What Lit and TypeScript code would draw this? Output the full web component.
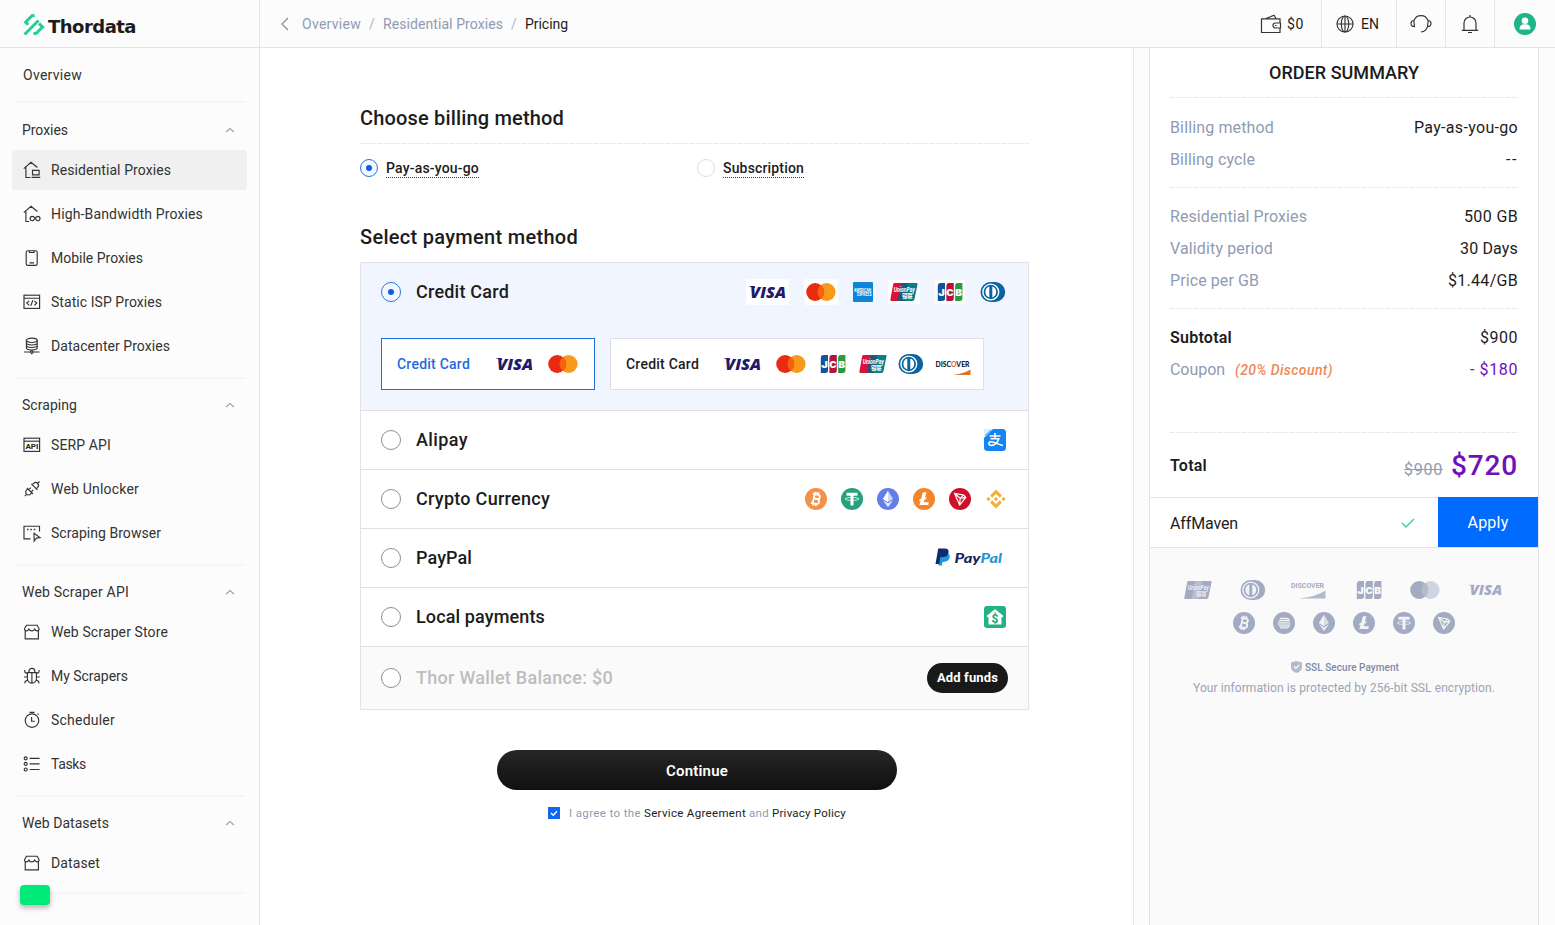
import { LitElement, html, svg, css, nothing } from "lit";
import { customElement, property } from "lit/decorators.js";

/** Text that is tracked in or out so that it fills a given width. */
@customElement("fit-text")
class FitText extends LitElement {
  @property({ type: String }) text = "";
  @property({ type: Number }) w = 0;
  static styles = css`
    :host { display: inline-block; white-space: nowrap; }
    span { display: inline-block; white-space: pre; }
    :host(.old) span { text-decoration: line-through; }
  `;
  firstUpdated() {
    const el = this.renderRoot.querySelector("span") as HTMLElement;
    const natural = el.getBoundingClientRect().width;
    if (this.w) el.style.letterSpacing = (this.w - natural) / this.text.length + "px";
  }
  render() {
    return html`<span>${this.text}</span>`;
  }
}

const t = (text: string, w: number, cls = "") =>
  html`<fit-text class=${cls} .text=${text} .w=${w}></fit-text>`;

const stroke = (body: unknown, s = 18) => html`
  <svg class="ico" width=${s} height=${s} viewBox="0 0 18 18" fill="none" stroke="#333" stroke-width="1.15">${body}</svg>`;

const navIcons: Record<string, unknown> = {
  home: svg`<path d="M.8 7.6 8 1.2l6.400 5.300M2.900 6.300v10.200h4.600M9.500 9.300h6.600v4.600H9.500zM8.600 16.300h8.600"/>`,
  homeInf: svg`<path d="M.8 7.6 8 1.2l6.400 5.300M2.900 6.300v10.200h3.300M12.200 13.300c-1-1.500-1.900-2-2.900-2a2.200 2.200 0 0 0 0 4.400c1.200 0 1.900-.7 2.900-2.400 1-1.400 1.600-2 2.600-2a2.200 2.200 0 0 1 0 4.400c-1 0-1.700-.7-2.600-2.400z"/>`,
  phone: svg`<rect x="3.200" y="1.700" width="11" height="14.600" rx="1.600"/><path d="M6.400 2v1.500h4.600V2M6.500 13.900h4.500"/>`,
  code: svg`<rect x="1" y="2.200" width="15.600" height="13.200"/><path d="M1 5.200h15.600M6.200 7.800 3.800 10l2.400 2.300M11.400 7.800l2.400 2.200-2.400 2.300M9.900 7.300l-2.200 5.600"/>`,
  db: svg`<ellipse cx="8.800" cy="3.300" rx="5.400" ry="2.200"/><path d="M3.400 3.300v7.500c0 1.200 2.400 2.200 5.400 2.200s5.400-1 5.400-2.200V3.300M3.400 5.800C3.400 7 5.800 8 8.800 8s5.400-1 5.400-2.200M3.400 8.300c0 1.200 2.400 2.200 5.400 2.200s5.400-1 5.400-2.200M1 15h6.200M10.400 15h6.200M8.800 13.400 10.400 15l-1.600 1.600L7.200 15z"/>`,
  api: svg`<rect x="1" y="2.200" width="15.600" height="13.200"/><path d="M1 5.200h15.600"/><text x="2.400" y="13.400" font-size="8" font-weight="700" textLength="13" lengthAdjust="spacingAndGlyphs" fill="#222" stroke="none">API</text>`,
  plug: svg`<path d="M1.800 16.200l2-2M8.800 12.900 7.500 14.200a2.800 2.800 0 0 1-4-4l1.300-1.300M4 8l6 6M6.300 9.200l1.600-1.600M8.600 11.500l1.600-1.600M8.400 3.800l6 6M9.300 4.700l1.300-1.300a2.800 2.800 0 0 1 4 4l-1.300 1.300M14.500 3.500l2-2"/>`,
  browser: svg`<path d="M7.500 14.800H1V2.200h15.500v5.300"/><path d="M4 5.400h1.500M7.400 5.400h1.500M10.800 5.400h1.500" stroke-width="1.500"/><path d="m11 9.300 6 4.300-3.600.5L11.200 17z"/>`,
  store: svg`<path d="M2.200 7.600v8.200h13.200V7.600M3.400 2.200h10.800l1.900 3.600c0 1.200-.9 2.100-2 2.100s-1.800-.7-2.400-1.800c-.6 1.100-1.700 1.800-2.900 1.800s-2.300-.7-2.900-1.800c-.6 1.100-1.200 1.800-2.400 1.800s-2-1-2-2.100z"/>`,
  bug: svg`<path d="M4.400 5.600h9v6a4.500 4.500 0 0 1-9 0zM6 5.400V4.200a2.900 2.900 0 0 1 5.800 0v1.200M8.900 5.600V16M1 10h3.200M13.600 10h3.200M1.600 3l.4 2.300 2.400 1.400M16.200 3l-.4 2.300-2.400 1.400M1.800 16.400l.4-2 2.500-1.300M16 16.400l-.4-2-2.500-1.300"/>`,
  clock: svg`<circle cx="9" cy="9.600" r="6.800"/><path d="M6.600 1.300h4.800M8.600 6v4.200h3.300M14.600 2.700l1 1"/>`,
  list: svg`<circle cx="2.700" cy="3.300" r="1.500"/><circle cx="2.700" cy="8.900" r="1.500"/><circle cx="2.700" cy="14.500" r="1.500"/><path d="M6.600 3.300h10M6.600 8.900h10M6.600 14.500h10"/>`,
};

const chevron = html`<svg width="10" height="6" viewBox="0 0 10 6" fill="none" stroke="#999" stroke-width="1.100"><path d="M1.200 5 5 1.400 8.800 5"/></svg>`;

const visa = (c = "#1f1a6b", w = 39) => html`
  <svg class="tile" width=${w} height="22" viewBox="0 0 39 22"><text x="2" y="17" font-family="Open Sans" font-weight="800" font-style="italic" font-size="16.500" textLength="36" lengthAdjust="spacingAndGlyphs" fill=${c}>VISA</text><path d="M.2 5.100h6.400l.8 2.200z" fill=${c}/></svg>`;
const master = (a = "#eb2a12", b = "#f79a1b", m = "#f9600f") => html`
  <svg class="tile" width="30" height="22" viewBox="0 0 30 22"><circle cx="20.600" cy="11" r="9" fill=${b}/><circle cx="9.200" cy="11" r="9" fill=${a}/><path d="M14.900 4a9 9 0 0 1 0 14 9 9 0 0 1 0-14" fill=${m}/></svg>`;
const amex = html`
  <svg width="20" height="20" viewBox="0 0 20 20"><rect width="20" height="20" rx="1" fill="#0a85da"/><g font-weight="700" fill="#fff" font-size="4.500"><text x="1" y="9.600" textLength="17" lengthAdjust="spacingAndGlyphs">AMERICAN</text><text x="4" y="14" textLength="14.500" lengthAdjust="spacingAndGlyphs">EXPRESS</text></g></svg>`;
const union = (a = "#d8133a", b = "#20587c", c = "#0b7f8c", f = "#fff") => html`
  <svg class="tile" width="28" height="20" viewBox="0 0 28 20"><path d="M4.600 1h8L9 19H1.400Q0 19 .4 17.400L3.200 2.200Q3.500 1 4.600 1z" fill=${a}/><path d="M11.500 1h8L16 19H7.500z" fill=${b}/><path d="M18.500 1h8q1.400 0 1 1.400L24.400 17.600Q24 19 22.600 19h-8z" fill=${c}/><g fill=${f} font-weight="700"><text x="3.800" y="9.500" font-style="italic" font-size="6.500" textLength="21" lengthAdjust="spacingAndGlyphs">UnionPay</text><text x="12" y="16.200" font-size="6" font-family="Noto Sans CJK SC" textLength="10.500" lengthAdjust="spacingAndGlyphs">银联</text></g></svg>`;
const jcb = (a = "#0f549d", b = "#b6113a", c = "#2a9a3e", f = "#fff") => html`
  <svg class="tile" width="26" height="20" viewBox="0 0 26 20"><path d="M3.500 1H8v15.500Q8 19 5 19H.8V4Q.8 1 3.500 1z" fill=${a}/><path d="M12 1h4.800v15.500q0 2.500-3 2.500H9.400V4q0-3 2.600-3z" fill=${b}/><path d="M20.600 1h4.800v15.500q0 2.500-3 2.500h-4.300V4q0-3 2.500-3z" fill=${c}/><g fill=${f} font-family="Inter" font-weight="900" font-size="9.500"><text x="1.200" y="13.500" textLength="6.600" lengthAdjust="spacingAndGlyphs">J</text><text x="9.300" y="13.500" textLength="7.400" lengthAdjust="spacingAndGlyphs">C</text><text x="18.200" y="13.500" textLength="6.800" lengthAdjust="spacingAndGlyphs">B</text></g></svg>`;
const diners = (a = "#0b64a0", f = "#fff") => html`
  <svg width="26" height="22" viewBox="0 0 26 22"><path d="M10.500 1H15a10.200 10 0 0 1 0 20h-4.500a10 10 0 0 1 0-20z" fill=${a}/><circle cx="10.800" cy="11" r="8.600" fill=${f}/><circle cx="10.800" cy="11" r="7.200" fill=${a}/><path d="M9.300 5.600v10.800a5.700 5.700 0 0 1 0-10.800zM12.300 5.600v10.800a5.700 5.700 0 0 0 0-10.800z" fill=${f}/></svg>`;
const discover = html`
  <svg width="36" height="24" viewBox="0 0 36 24"><text x=".5" y="14.500" font-family="Lato" font-weight="900" font-size="8" textLength="34" lengthAdjust="spacingAndGlyphs" fill="#222">DISC<tspan fill="#dc7228">O</tspan>VER</text><path d="M35.500 17.500V23H18q12-2 17.500-5.500z" fill="#dc7228"/></svg>`;
const discoverGray = html`
  <svg width="36" height="20" viewBox="0 0 36 20"><text x="0" y="8" font-weight="700" font-size="7" textLength="33" lengthAdjust="spacingAndGlyphs" fill="#a3abc2">DISCOVER</text><path d="M34.500 10.500v8H8Q26 16.500 34.500 10.500z" fill="#b3b9cc"/></svg>`;

const coinArt: Record<string, (f: string) => unknown> = {
  btc: (f) => svg`<g transform="rotate(12 11 11)" fill="none" stroke=${f} stroke-width="1.900"><path d="M6.800 6.300h5.300a2.200 2.200 0 0 1 0 4.500H8.600h4a2.500 2.500 0 0 1 0 4.900H6.800M8.700 6.300v9.400M9.500 3.900v2.400M12.100 3.900v2.400M9.500 15.700v2.400M12.100 15.700v2.400"/></g>`,
  usdt: (f) => svg`<path d="M5.500 4.800h11v2.900h-4v9.800h-3V7.700h-4z" fill=${f}/><ellipse cx="11" cy="10.900" rx="6.800" ry="1.500" fill="none" stroke=${f} stroke-width=".8"/>`,
  eth: (f) => svg`<path d="m11 2.800 5 8.300-5 3-5-3z" fill=${f} opacity=".7"/><path d="M11 2.800v11.300l-5-3z" fill=${f}/><path d="m6 12.200 5 3 5-3-5 7z" fill=${f} opacity=".85"/>`,
  ltc: (f) => svg`<path d="M10 4.300h3.400l-1.500 5.600 1.800-.7-.5 1.800-1.800.7-.7 2.500h5.200l-.7 2.700H6.400l1.100-4.200-1.500.6.500-1.800 1.500-.6z" fill=${f}/>`,
  trx: (f) => svg`<path d="m5.500 5.300 9 1.700 2.300 2.300-6.200 7.800zM5.500 5.300l5.700 5 3.300-3.300M11.200 10.300l-.6 6.800M11.200 10.300l5.600-1" fill="none" stroke=${f} stroke-width="1.200" stroke-linejoin="round"/>`,
  stack: (f) => svg`<path d="M7 6.400h6.500q2 0 2.700 2H6M4.800 10.200h12.400M4.800 12h12.400M6 13.900h10.200q-.7 2-2.700 2H7" fill="none" stroke=${f} stroke-width="1.100"/>`,
};
const coin = (kind: string, c: string, f = "#fff") => html`
  <svg width="22" height="22" viewBox="0 0 22 22"><circle cx="11" cy="11" r="11" fill=${c}/>${coinArt[kind](f)}</svg>`;
const bnb = html`
  <svg width="22" height="22" viewBox="0 0 22 22" fill="#f0b23a"><path d="m11 1.500 6 6-2.200 2.200L11 5.900 7.200 9.700 5 7.500zM11 20.500l-6-6 2.200-2.200 3.800 3.800 3.800-3.800 2.200 2.200zM11 8.800l2.200 2.200-2.200 2.200L8.800 11zM3.500 8.800 5.700 11l-2.200 2.200L1.300 11zM18.500 8.800l2.200 2.200-2.200 2.200-2.200-2.200z"/></svg>`;
const alipay = html`
  <svg width="22" height="22" viewBox="0 0 22 22"><rect width="22" height="22" rx="3.500" fill="#1683f2"/><path d="M0 3.500Q0 0 3.500 0H9L0 9z" fill="#e8f2ff"/><path d="M1 6.500 7 .8M2.500 7.500 9.500.8" stroke="#1683f2" stroke-width=".9"/><path d="M5.500 7h11M11 4v5.800M6.500 9.800h8.300q-2 6-7 6.600c-3.500.3-4-3.200-1-3.600 3-.3 6 2 12 3.800" fill="none" stroke="#fff" stroke-width="1.600"/></svg>`;
const local = html`
  <svg width="22" height="22" viewBox="0 0 22 22"><rect width="22" height="22" rx="3" fill="#21b184"/><path d="M11 3 19.500 10l-1.200 1.400-.8-.6V18.500h-13v-7.700l-.8.600L2.500 10z" fill="#fff"/><text x="11" y="17" text-anchor="middle" font-size="12" font-weight="700" fill="#21a37a">$</text></svg>`;
const paypal = html`
  <svg width="72" height="22" viewBox="0 0 72 22"><path d="M6.500 6h7q3 1.500 2 5t-6 4H8.500L7.800 18.500H4.500z" fill="#1999dc"/><path d="M4.200 1.500h6.600q4.400 0 3.700 4.200t-5.700 4.200H6.400L5.300 17H1.500z" fill="#12296f"/><g font-family="Lato" font-weight="900" font-style="italic" font-size="14"><text x="20.500" y="16" fill="#17265f" textLength="26" lengthAdjust="spacingAndGlyphs">Pay</text><text x="46.500" y="16" fill="#2a93cf" textLength="21.500" lengthAdjust="spacingAndGlyphs">Pal</text></g></svg>`;

const nav = [
  { title: ["Proxies", 46], items: [["home", "Residential Proxies", 120], ["homeInf", "High-Bandwidth Proxies", 152], ["phone", "Mobile Proxies", 92], ["code", "Static ISP Proxies", 111], ["db", "Datacenter Proxies", 119]] },
  { title: ["Scraping", 55], items: [["api", "SERP API", 60], ["plug", "Web Unlocker", 88], ["browser", "Scraping Browser", 110]] },
  { title: ["Web Scraper API", 107], items: [["store", "Web Scraper Store", 117], ["bug", "My Scrapers", 77], ["clock", "Scheduler", 64], ["list", "Tasks", 35]] },
  { title: ["Web Datasets", 87], items: [["store", "Dataset", 49]] },
] as { title: [string, number]; items: [string, string, number][] }[];

const G = "#a3abc2";
const G2 = "#b8bed0";

@customElement("app-root")
class AppRoot extends LitElement {
  static styles = css`
    :host { display: block; height: 925px; overflow: hidden; font-family: Roboto, "Noto Sans", sans-serif; font-size: 14px; color: #1c1c1c; background: #fff; }
    * { box-sizing: border-box; }
    svg { display: block; flex: none; overflow: visible; }
    .shell { display: grid; grid-template: 48px 877px / 260px 1fr; height: 925px; position: relative; }
    .row { display: flex; align-items: center; }
    .brand, .top { background: #fcfcfc; border-bottom: 1px solid #e3e3e3; display: flex; align-items: center; }
    .brand { border-right: 1px solid #e6e6e6; padding: 3px 0 0 22px; gap: 3px; }
    .brand fit-text { font-family: "DejaVu Sans", sans-serif; font-weight: 700; font-size: 18px; line-height: 22px; color: #1c1c1c; padding-top: 3px; }
    .top { padding-left: 20px; }
    .crumbs { gap: 8px; color: #8f9bb3; flex: 1; padding-top: 1px; }
    .crumbs .slash { color: #b2b6c0; }
    .crumbs .now { color: #1c1c1c; }
    .cell { height: 47px; border-left: 1px solid #e6e6e6; display: flex; align-items: center; justify-content: center; padding-top: 1px; }
    .c0 { border: 0; gap: 5px; width: 78px; }
    .c1 { width: 75px; gap: 7px; padding: 1px 3px 0 0; } .c2 { width: 49px; } .c3 { width: 49px; } .c4 { width: 61px; }

    .side { background: #fcfcfc; border-right: 1px solid #e6e6e6; padding: 7px 12px 0 12px; color: #333; }
    .over { height: 40px; padding-left: 11px; display: flex; align-items: center; }
    .sep { height: 2px; margin: 11px 2px 6px 4px; background: #f6f6f6; }
    .sep.first { margin: 6px 2px 7px 4px; }
    .sep.last { margin-top: 9px; }
    .shead { height: 40px; padding: 0 12px 0 10px; display: flex; align-items: center; justify-content: space-between; }
    .items { display: flex; flex-direction: column; gap: 4px; }
    .item { height: 40px; padding-left: 11px; gap: 10px; display: flex; align-items: center; border-radius: 3px; width: 235px; }
    .item.on { background: #f0f0f0; }
    .green { position: absolute; left: 20px; top: 885px; width: 30px; height: 20px; border-radius: 4px; background: #00ea7a; box-shadow: 0 3px 5px rgba(90, 40, 60, .35); }

    .body { display: grid; grid-template-columns: 874px 15px 390px 1fr; background: #fcfcfc; }
    .main { background: #fff; border-right: 1px solid #e6e6e6; padding: 56px 104px 0 100px; }
    h2 { margin: 0; font-weight: 500; font-size: 20px; line-height: 28px; height: 28px; }
    .dash { height: 1px; background: repeating-linear-gradient(90deg, #e9e9e9 0 4px, #f6f6f6 4px 6px); }
    .bill { margin-top: 11px; }
    .choices { display: grid; grid-template-columns: 337px 1fr; margin-top: 13px; height: 22px; }
    .choice { gap: 8px; font-weight: 500; }
    .choice fit-text { border-bottom: 1px dotted #333; line-height: 18px; height: 19px; margin-top: 1px; }
    .radio { flex: none; width: 20px; height: 20px; border-radius: 50%; border: 1px solid #8d8d98; background: #fff; display: grid; place-items: center; }
    .radio.sm { width: 18px; height: 18px; }
    .radio.light { border-color: #dcdcdc; }
    .radio.on { border-color: #2f74e0; background: #f2f8ff; }
    .radio.on::after { content: ""; width: 6px; height: 6px; border-radius: 50%; background: #1259e8; }
    .h2b { margin-top: 44px; }
    .pay { margin-top: 11px; border: 1px solid #e3e3e6; width: 669px; }
    .line { height: 59px; border-top: 1px solid #e0e0e3; padding: 0 22px 0 20px; font-size: 18px; font-weight: 500; gap: 15px; }
    .line .grow { flex: 1; margin-top: -1px; }
    .credit { background: #f1f5ff; height: 147px; }
    .credit .line { border: 0; height: 58px; }
    .line.wallet { height: 63px; background: #fafafa; color: #bdbdbd; padding-right: 20px; }
    .tile { background: #fff; box-shadow: 0 0 0 2px rgba(255, 255, 255, .8); }
    .brands { display: flex; align-items: center; gap: 17px; }
    .brands .a { margin-right: 2px; }
    .coins { display: flex; gap: 14px; margin-right: -1px; }
    .opts { display: flex; gap: 15px; padding: 17px 0 0 20px; font-weight: 500; }
    .opt { height: 52px; background: #fff; border: 1px solid #dfe1e8; display: flex; align-items: center; padding-left: 15px; width: 374px; }
    .opt.on { width: 214px; border-color: #1a70d8; color: #1f6ae0; }
    .g25 { margin-left: 25px; } .g24 { margin-left: 24px; } .g14 { margin-left: 14px; } .g13 { margin-left: 13px; } .g11 { margin-left: 11px; }
    .funds { width: 81px; height: 30px; border-radius: 15px; background: #191919; color: #fff; font-size: 13px; font-weight: 700; display: grid; place-items: center; padding-bottom: 1px; }
    .go { width: 400px; height: 40px; border-radius: 20px; margin: 40px 0 0 137px; background: linear-gradient(#262626, #101010); color: #fff; font-size: 15px; font-weight: 600; display: grid; place-items: center; padding-top: 2px; }
    .agree { margin: 14px 0 0 188px; font-size: 11.500px; color: #8f9bb3; height: 18px; gap: 3px; }
    .agree b { font-weight: 400; color: #1c1c1c; }
    .box { width: 12px; height: 12px; background: #1168f0; margin-right: 6px; }

    .sum { border: 1px solid #e3e3e6; border-width: 0 1px; background: #fafafa; font-size: 16px; }
    .white { background: #fff; padding: 10px 20px 0; height: 449px; }
    .title { text-align: center; font-size: 18px; font-weight: 500; line-height: 30px; height: 39px; }
    .kv { height: 32px; display: flex; align-items: center; justify-content: space-between; padding-bottom: 1px; }
    .rows { padding: 14px 0 11px; }
    .rows.mid { padding: 13px 0 11px; }
    .rows.tall { padding: 13px 0 46px; }
    .k { color: #8f9bb3; }
    .disc { color: #ef8758; font-style: italic; font-size: 14px; font-weight: 500; margin-left: 10px; }
    .strong { font-weight: 600; }
    .purple { color: #7010b8; }
    .total { height: 64px; padding: 1px 0 0; }
    .total .old { color: #8f9bb3; margin: 7px 8px 0 0; }
    .total .big { font-size: 28px; font-weight: 500; }
    .coupon { height: 51px; border: 1px solid #e3e3e6; border-width: 1px 0; background: #fff; padding-left: 20px; }
    .coupon .grow { flex: 1; padding-top: 1px; }
    .apply { width: 100px; height: 50px; background: #006bff; color: #fff; display: grid; place-items: center; margin: -1px 0 0 23px; }
    .logos { display: flex; align-items: center; justify-content: space-between; margin: 32px 35px 0 34px; height: 20px; width: 319px; }
    .logos .tile { background: none; box-shadow: none; }
    .logos .l { margin: 0 1px 0 -3px; }
    .logos2 { display: flex; justify-content: center; gap: 18px; margin-top: 12px; }
    .ssl { display: flex; justify-content: center; align-items: center; gap: 3px; margin: 23px 0 0 2px; height: 20px; font-size: 10px; font-weight: 500; color: #7f8aa5; }
    .note { text-align: center; font-size: 12px; line-height: 20px; color: #9aa3b8; margin-top: 1px; }
  `;

  private radio(on = false, cls = "") {
    return html`<span class="radio ${cls} ${on ? "on" : ""}"></span>`;
  }

  private line(label: string, w: number, right: unknown, cls = "", on = false) {
    return html`<div class="line row ${cls}">${this.radio(on)}${t(label, w, "grow")}${right}</div>`;
  }

  private kv(k: string, kw: number, v: string, vw: number, kc = "k", vc = "", extra: unknown = nothing) {
    return html`<div class="kv"><span>${t(k, kw, kc)}${extra}</span>${t(v, vw, vc)}</div>`;
  }

  private sidebar() {
    return html`<nav class="side">
      <div class="over">${t("Overview", 59)}</div>
      ${nav.map((s, i) => html`
        <div class="sep ${i ? "" : "first"}"></div>
        <div class="shead">${t(s.title[0], s.title[1])}${chevron}</div>
        <div class="items">${s.items.map((it) => html`
          <div class="item ${it[0] === "home" ? "on" : ""}">${stroke(navIcons[it[0]])}${t(it[1], it[2])}</div>`)}</div>`)}
      <div class="sep last"></div>
    </nav>`;
  }

  private topbar() {
    return html`<header class="top">
      <div class="crumbs row">
        <svg width="14" height="16" viewBox="0 0 14 16" fill="none" stroke="#8b8b8b" stroke-width="1.200"><path d="M8 2 2 8l6 6"/></svg>
        ${t("Overview", 59)}${t("/", 6, "slash")}${t("Residential Proxies", 120)}${t("/", 6, "slash")}${t("Pricing", 43, "now")}
      </div>
      <div class="cell c0">
        <svg width="22" height="20" viewBox="0 0 22 20" fill="none" stroke="#333" stroke-width="1.200"><path d="M20 9V4.800H1.500v13.700H20V14M6 4.500l8-3.300 2 3.300M20.500 9h-5a2.500 2.500 0 0 0 0 5h5zM15 11.500h1.500"/></svg>
        ${t("$0", 17)}
      </div>
      <div class="cell c1">
        <svg width="18" height="18" viewBox="0 0 18 18" fill="none" stroke="#333" stroke-width="1.150"><circle cx="9" cy="9" r="8"/><ellipse cx="9" cy="9" rx="3.700" ry="8"/><path d="M9 1v16M1 9h16"/></svg>
        ${t("EN", 18)}
      </div>
      <div class="cell c2">
        <svg width="22" height="20" viewBox="0 0 22 20" fill="none" stroke="#333" stroke-width="1.150"><path d="M4 6.500a7.500 7.500 0 0 1 14 0M4 6.500C2 6.500 1 8 1 9.500S2 12.600 4.500 12.600L3.800 6.500M18 6.500c2 0 3 1.500 3 3s-1 3.100-3.500 3.100l.7-6.100M17.500 12.600c-.8 3-3 5-6.500 5.400"/></svg>
      </div>
      <div class="cell c3">
        <svg width="18" height="20" viewBox="0 0 18 20" fill="none" stroke="#333" stroke-width="1.200"><path d="M.8 16.300h16.400M3 16.300V9a6 6 0 0 1 12 0v7.300M9 3V1M7 18.500h4"/></svg>
      </div>
      <div class="cell c4">
        <svg width="22" height="22" viewBox="0 0 22 22"><circle cx="11" cy="11" r="11" fill="#1fb588"/><circle cx="11" cy="7.800" r="3.300" fill="#fff"/><path d="M5.500 16.500q0-4.500 3.500-5.300h4q3.500.8 3.500 5.300z" fill="#fff"/></svg>
      </div>
    </header>`;
  }

  private mainCol() {
    return html`<main class="main">
      <h2>${t("Choose billing method", 204)}</h2>
      <div class="dash bill"></div>
      <div class="choices">
        <div class="choice row">${this.radio(true, "sm")}${t("Pay-as-you-go", 93)}</div>
        <div class="choice row">${this.radio(false, "sm light")}${t("Subscription", 81)}</div>
      </div>
      <h2 class="h2b">${t("Select payment method", 218)}</h2>
      <section class="pay">
        <div class="credit">
          ${this.line("Credit Card", 93, html`<div class="brands">
            <span class="a">${visa()}</span>${master()}${amex}<span class="a">${union()}</span>${jcb()}${diners()}</div>`, "", true)}
          <div class="opts">
            <div class="opt on">${t("Credit Card", 73)}<span class="g25">${visa()}</span><span class="g14">${master()}</span></div>
            <div class="opt">${t("Credit Card", 73)}<span class="g24">${visa()}</span><span class="g14">${master()}</span><span class="g14">${jcb()}</span><span class="g13">${union()}</span><span class="g11">${diners()}</span><span class="g11">${discover}</span></div>
          </div>
        </div>
        ${this.line("Alipay", 52, alipay)}
        ${this.line("Crypto Currency", 134, html`<div class="coins">${coin("btc", "#f1914a")}${coin("usdt", "#26a17b")}${coin("eth", "#627eea")}${coin("ltc", "#f5852b")}${coin("trx", "#d0102a")}${bnb}</div>`)}
        ${this.line("PayPal", 56, paypal)}
        ${this.line("Local payments", 129, local)}
        ${this.line("Thor Wallet Balance: $0", 197, html`<div class="funds">${t("Add funds", 61)}</div>`, "wallet")}
      </section>
      <div class="go">${t("Continue", 62)}</div>
      <div class="agree row">
        <svg class="box" viewBox="0 0 12 12" fill="none" stroke="#fff" stroke-width="1.400"><path d="m3 6 2.200 2.200L9 4.200"/></svg>
        ${t("I agree to the", 72)}<b>${t("Service Agreement", 102)}</b>${t("and", 20)}<b>${t("Privacy Policy", 74)}</b>
      </div>
    </main>`;
  }

  private summary() {
    return html`<aside class="sum">
      <div class="white">
        <div class="title">${t("ORDER SUMMARY", 150)}</div>
        <div class="dash"></div>
        <div class="rows">
          ${this.kv("Billing method", 104, "Pay-as-you-go", 104)}
          ${this.kv("Billing cycle", 85, "--", 12)}
        </div>
        <div class="dash"></div>
        <div class="rows mid">
          ${this.kv("Residential Proxies", 137, "500 GB", 54)}
          ${this.kv("Validity period", 103, "30 Days", 58)}
          ${this.kv("Price per GB", 89, "$1.44/GB", 70)}
        </div>
        <div class="dash"></div>
        <div class="rows tall">
          ${this.kv("Subtotal", 62, "$900", 38, "strong")}
          ${this.kv("Coupon", 55, "- $180", 48, "k", "purple", t("(20% Discount)", 98, "disc"))}
        </div>
        <div class="dash"></div>
        <div class="kv total">${t("Total", 37, "strong")}<span class="row">${t("$900", 39, "old")}${t("$720", 67, "big purple")}</span></div>
      </div>
      <div class="coupon row">
        ${t("AffMaven", 68, "grow")}
        <svg width="14" height="10" viewBox="0 0 14 10" fill="none" stroke="#3ccf9a" stroke-width="1.400"><path d="m1 5 4 4 8-8"/></svg>
        <div class="apply">${t("Apply", 41)}</div>
      </div>
      <div class="logos">${union(G, G2, G, "#e9ecf3")}${diners(G, "#f2f3f7")}<span class="l">${discoverGray}</span>${jcb(G, G, G, "#fafafa")}${master(G, "#d0d3e0", "#b5bbcd")}${visa(G, 35)}</div>
      <div class="logos2">${["btc", "stack", "eth", "ltc", "usdt", "trx"].map((k) => coin(k, G, "#f2f3f7"))}</div>
      <div class="ssl">
        <svg width="11" height="12" viewBox="0 0 11 12"><path d="M5.500 0 11 1.500V7q-1 3.500-5.500 5Q1 10.500 0 7V1.500z" fill="#b3bacb"/><path d="m3 5.500 2 2 3.300-3.600" fill="none" stroke="#fff" stroke-width="1.200"/></svg>
        ${t("SSL Secure Payment", 94)}
      </div>
      <div class="note">${t("Your information is protected by 256-bit SSL encryption.", 302)}</div>
    </aside>`;
  }

  render() {
    return html`<div class="shell">
      <div class="brand">
        <svg width="23" height="23" viewBox="0 0 23 23" fill="none" stroke="#22cf98" stroke-width="3"><path d="M12.500 1.500 10 1.800 3.600 8.200 6.200 10.800M2.500 20.500 16.500 6.500M17 9.500l3.600 3.600-6.400 6.200-2.700.4"/></svg>
        ${t("Thordata", 88)}
      </div>
      ${this.topbar()}
      ${this.sidebar()}
      <div class="body">${this.mainCol()}<div></div>${this.summary()}<div></div></div>
      <div class="green"></div>
    </div>`;
  }
}
